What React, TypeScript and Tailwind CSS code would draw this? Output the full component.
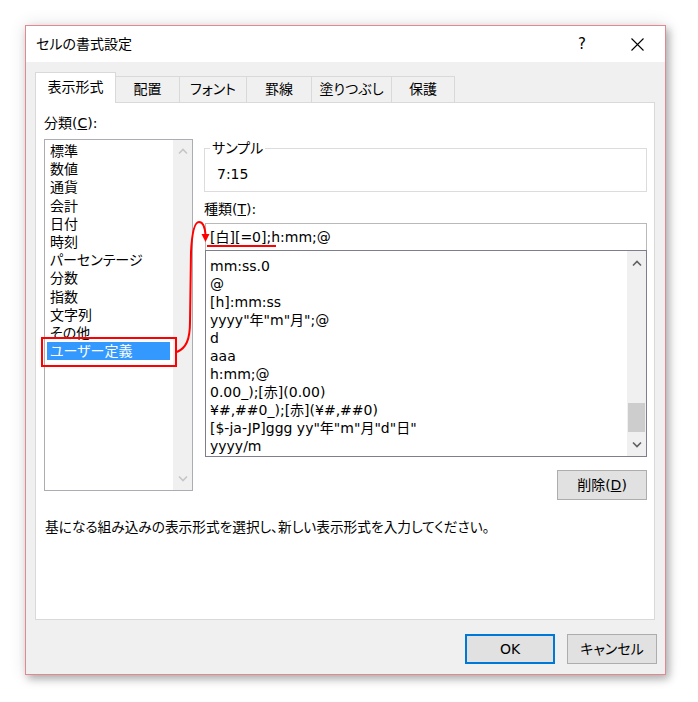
import React from "react";

const Chevron = ({ up, color }: { up?: boolean; color: string }) => (
  <svg width="10" height="7" viewBox="0 0 10 7">
    <path
      d={up ? "M1 5.5 L5 1.5 L9 5.5" : "M1 1.5 L5 5.5 L9 1.5"}
      fill="none"
      stroke={color}
      strokeWidth="1.6"
    />
  </svg>
);

const cats = [
  "標準",
  "数値",
  "通貨",
  "会計",
  "日付",
  "時刻",
  "パーセンテージ",
  "分数",
  "指数",
  "文字列",
  "その他",
  "ユーザー定義",
];

const formats = [
  "mm:ss.0",
  "@",
  "[h]:mm:ss",
  'yyyy"年"m"月";@',
  "d",
  "aaa",
  "h:mm;@",
  "0.00_);[赤](0.00)",
  "¥#,##0_);[赤](¥#,##0)",
  '[$-ja-JP]ggg yy"年"m"月"d"日"',
  "yyyy/m",
];

const tabs = [
  { label: "配置", w: "w-[64px]" },
  { label: "フォント", w: "w-[67px]" },
  { label: "罫線", w: "w-[65px]" },
  { label: "塗りつぶし", w: "w-[80px]" },
  { label: "保護", w: "w-[63px]" },
];

export default function App() {
  return (
    <div className="relative w-[698px] h-[702px] bg-white pt-[25px] pl-[25px] text-[14px] text-black font-['DejaVu_Sans','Noto_Sans_CJK_JP',sans-serif] [font-feature-settings:'palt']">
      <div className="flex h-[650px] w-[641px] flex-col border border-[#e38891] bg-[#f0f0f0] shadow-[3px_4px_8px_rgba(0,0,0,0.28),0_0_16px_rgba(0,0,0,0.12)]">
        {/* title bar */}
        <div className="flex h-[36px] items-center bg-white pl-[10px]">
          <div className="flex-1 leading-[20px]">セルの書式設定</div>
          <div className="flex h-[36px] w-[46px] items-center justify-center text-[15px]">?</div>
          <div className="ml-[9px] mr-[5px] flex h-[36px] w-[46px] items-center justify-center">
            <svg width="13" height="13" viewBox="0 0 13 13">
              <path d="M0.5 0.5 L12.5 12.5 M12.5 0.5 L0.5 12.5" stroke="#000" strokeWidth="1.1" />
            </svg>
          </div>
        </div>

        {/* body */}
        <div className="flex flex-1 flex-col pl-[9px] pr-[10px] pt-[10px]">
          {/* tabs */}
          <div className="flex h-[30px] items-end">
            <div className="relative z-10 mb-[-1px] flex h-[31px] w-[81px] items-center justify-center border border-b-0 border-[#d9d9d9] bg-white pb-[2px]">
              表示形式
            </div>
            {tabs.map((t) => (
              <div
                key={t.label}
                className={`flex h-[26px] ${t.w} items-center justify-center border border-l-0 border-b-0 border-[#d9d9d9] bg-[#f0f0f0]`}
              >
                {t.label}
              </div>
            ))}
          </div>

          {/* panel */}
          <div className="flex h-[518px] flex-col border border-[#d9d9d9] bg-white pl-[8px]">
            <div className="flex gap-[11px]">
              {/* left column */}
              <div className="flex w-[149px] flex-col pt-[10px]">
                <div className="h-[20px] leading-[20px]">
                  分類(<span className="underline">C</span>):
                </div>
                <div className="mt-[6px] flex h-[352px] border border-[#abadb3] bg-white">
                  <div className="flex-1 pl-[2px] pt-[2px]">
                    {cats.map((c, i) => (
                      <div
                        key={c}
                        className={
                          i === 11
                            ? "h-[18.2px] w-[123px] bg-[#3399ff] pl-[3px] leading-[18px] text-white"
                            : "h-[18.2px] pl-[3px] leading-[18px]"
                        }
                      >
                        {c}
                      </div>
                    ))}
                  </div>
                  <div className="flex w-[19px] flex-col items-center justify-between bg-[#f0f0f0] py-[8px]">
                    <Chevron up color="#c6c6c6" />
                    <Chevron color="#c6c6c6" />
                  </div>
                </div>
              </div>

              {/* right column */}
              <div className="flex w-[443px] flex-col pt-[36px]">
                <fieldset className="h-[53px] border border-[#dcdcdc]">
                  <legend className="ml-[5px] px-[2px] leading-[18px]">サンプル</legend>
                  <div className="mt-[8px] pl-[12px] leading-[18px]">7:15</div>
                </fieldset>
                <div className="mt-[7px] h-[20px] leading-[20px]">
                  種類(<span className="underline">T</span>):
                </div>
                <div className="ml-[1px] mt-[4px] flex h-[27px] items-center border border-b-0 border-[#b9b9b9] pl-[4px]">
                  [白][=0];h:mm;@
                </div>
                <div className="ml-[1px] flex h-[207px] border border-[#7d7f8c] bg-white">
                  <div className="flex-1 pl-[4px] pt-[6px]">
                    {formats.map((f) => (
                      <div key={f} className="h-[18px] leading-[18px] whitespace-nowrap">
                        {f}
                      </div>
                    ))}
                  </div>
                  <div className="flex w-[19px] flex-col bg-[#f0f0f0]">
                    <div className="flex h-[24px] items-center justify-center">
                      <Chevron up color="#606060" />
                    </div>
                    <div className="flex-1" />
                    <div className="mx-[1px] h-[29px] bg-[#cdcdcd]" />
                    <div className="flex h-[24px] items-center justify-center">
                      <Chevron color="#606060" />
                    </div>
                  </div>
                </div>
                <div className="mt-[13px] flex justify-end">
                  <div className="flex h-[30px] w-[90px] items-center justify-center border border-[#adadad] bg-[#e1e1e1]">
                    削除(<span className="underline">D</span>)
                  </div>
                </div>
              </div>
            </div>
            <div className="ml-[1px] mt-[18px] text-[13.7px] leading-[18px]">
              基になる組み込みの表示形式を選択し、新しい表示形式を入力してください。
            </div>
          </div>

          {/* buttons */}
          <div className="mr-[-2px] mt-[14px] flex justify-end gap-[12px]">
            <div className="flex h-[30px] w-[90px] items-center justify-center border-2 border-[#0078d7] bg-[#e1e1e1]">
              OK
            </div>
            <div className="flex h-[30px] w-[90px] items-center justify-center border border-[#adadad] bg-[#e1e1e1]">
              キャンセル
            </div>
          </div>
        </div>
      </div>

      {/* annotation overlay */}
      <svg className="pointer-events-none absolute left-0 top-0" width="698" height="702" viewBox="0 0 698 702">
        <rect x="42" y="338" width="134" height="28" fill="none" stroke="#ff0000" strokeWidth="2" />
        <path
          d="M177 352 C186 348 190 340 190 322 L191 252 C192 232 195 222 199 222 C203 222 205 228 205.5 235"
          fill="none"
          stroke="#ff0000"
          strokeWidth="2"
        />
        <path d="M201.5 234 L209.5 234 L205.5 242 Z" fill="#ff0000" />
        <line x1="207" y1="246" x2="276" y2="246" stroke="#ff0000" strokeWidth="2" />
      </svg>
    </div>
  );
}
